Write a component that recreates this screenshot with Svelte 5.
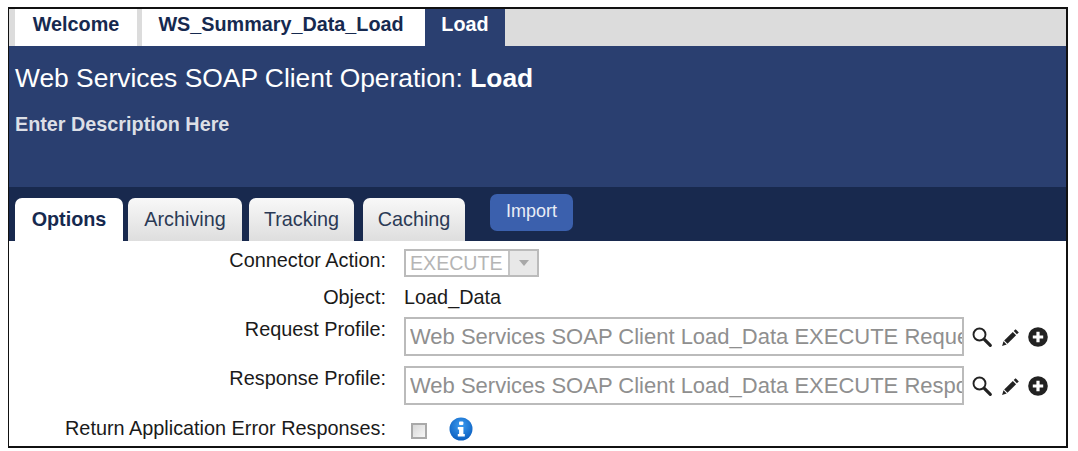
<script>
  const tabs = [
    { label: 'Welcome', cls: 'w1' },
    { label: 'WS_Summary_Data_Load', cls: 'w2' },
    { label: 'Load', cls: 'w3 active' }
  ];
  const subTabs = [
    { label: 'Options', cls: 's1 active' },
    { label: 'Archiving', cls: 's2' },
    { label: 'Tracking', cls: 's3' },
    { label: 'Caching', cls: 's4' }
  ];
  const profiles = [
    { label: 'Request Profile:', value: 'Web Services SOAP Client Load_Data EXECUTE Request Profile', cls: 'req' },
    { label: 'Response Profile:', value: 'Web Services SOAP Client Load_Data EXECUTE Response Profile', cls: 'res' }
  ];
</script>

<div class="frame">
  <nav class="top">
    {#each tabs as t}
      <div class="ttab {t.cls}">{t.label}</div>
    {/each}
  </nav>
  <header class="head">
    <h1>Web Services SOAP Client Operation: <b>Load</b></h1>
    <p>Enter Description Here</p>
  </header>
  <div class="bar">
    {#each subTabs as t}
      <div class="stab {t.cls}">{t.label}</div>
    {/each}
    <button class="import">Import</button>
  </div>
  <div class="form">
    <div class="row r1">
      <span class="lab">Connector Action:</span>
      <div class="sel"><span class="selv">EXECUTE</span><span class="arrow"><i></i></span></div>
    </div>
    <div class="row r2">
      <span class="lab">Object:</span>
      <span class="val">Load_Data</span>
    </div>
    {#each profiles as p}
      <div class="row prof {p.cls}">
        <span class="lab">{p.label}</span>
        <input class="inp" readonly value={p.value} />
        <div class="icons">
          <svg width="22" height="22" viewBox="0 0 22 22"><circle cx="8.5" cy="8.5" r="6" fill="none" stroke="#222" stroke-width="1.9"/><path d="M13.3 13.3l6 6" stroke="#222" stroke-width="3.2" stroke-linecap="round"/></svg>
          <svg width="19" height="19" viewBox="0 0 19 19"><path d="M14.6 1.2l3.2 3.2-1.9 1.9-3.2-3.2z" fill="#222"/><path d="M11.8 3.9l3.3 3.3-8.6 8.6-3.3-3.3z" fill="#222"/><path d="M2.5 13.3l3.2 3.2-4.6 1.4z" fill="#222"/></svg>
          <svg width="20" height="20" viewBox="0 0 20 20"><circle cx="10" cy="10" r="9.8" fill="#222"/><path d="M10 4.8v10.4M4.8 10h10.4" stroke="#fff" stroke-width="3.2"/></svg>
        </div>
      </div>
    {/each}
    <div class="row r5">
      <span class="lab">Return Application Error Responses:</span>
      <span class="check"></span>
      <svg class="info" width="24" height="24" viewBox="0 0 24 24">
        <defs><radialGradient id="g" cx="50%" cy="35%" r="65%"><stop offset="0" stop-color="#3d9cf0"/><stop offset="1" stop-color="#0b5fc0"/></radialGradient></defs>
        <circle cx="12" cy="12" r="11.5" fill="url(#g)"/>
        <rect x="10" y="4.5" width="4.4" height="3.6" rx="1" fill="#fff"/>
        <path d="M8.8 10h5.6v7h1.4v2.4H8.8V17h1.3v-4.6H8.8z" fill="#fff"/>
      </svg>
    </div>
  </div>
</div>

<style>
  :global(body) { margin: 0; background: #fff; }
  .frame {
    box-sizing: border-box;
    width: 1060px;
    height: 441px;
    margin: 7px 0 0 8px;
    border: 2px solid #111;
    border-width: 2px 2px 2px 1.5px;
    font-family: "Liberation Sans", Arial, sans-serif;
    overflow: hidden;
    background: #fff;
    color: #1a1a1a;
  }
  .top { display: flex; height: 37px; background: #dcdcdc; padding-left: 6px; }
  .ttab {
    display: flex; align-items: center; justify-content: center;
    background: #fff; font-weight: 700; font-size: 19.8px; color: #16294f; padding-bottom: 6px; box-sizing: border-box;
  }
  .w1 { width: 122px; margin-right: 5px; }
  .w2 { width: 283px; padding-right: 5px; }
  .w3 { width: 80px; }
  .ttab.active { background: #2a3f70; color: #fff; }
  .head { background: #2a3f70; height: 141px; box-sizing: border-box; padding: 15px 0 0 6px; color: #fff; }
  h1 { margin: 0; font-size: 26.4px; font-weight: 400; line-height: 34px; }
  h1 b { font-weight: 700; }
  .head p { margin: 18px 0 0; font-size: 19.8px; font-weight: 700; color: #dcdfe6; line-height: 22px; }
  .bar { position: relative; height: 54px; background: #18294e; display: flex; align-items: flex-end; padding-left: 6px; }
  .stab {
    box-sizing: border-box; height: 43px; border-radius: 7px 7px 0 0;
    display: flex; align-items: center; justify-content: center;
    background: linear-gradient(#f8f8f8, #dedede);
    font-size: 19.8px; color: #2b3a55;
  }
  .s1 { width: 108px; margin-right: 5px; }
  .s2 { width: 114px; margin-right: 7px; }
  .s3 { width: 105px; margin-right: 9px; }
  .s4 { width: 102px; }
  .stab.active { background: #fff; font-weight: 700; color: #16294f; }
  .import {
    align-self: flex-start; margin: 7px 0 0 25px;
    width: 83px; height: 37px; padding: 0 0 2px; border: 0; border-radius: 7px;
    background: #3b60ad; color: #e8edf6; font: 18px "Liberation Sans", Arial, sans-serif;
  }
  .form { display: flex; flex-direction: column; font-size: 19.85px; }
  .row { display: grid; grid-template-columns: 377px auto 1fr; column-gap: 18px; align-items: center; }
  .lab { text-align: right; white-space: nowrap; }
  .r1 { margin-top: 8px; height: 28px; }
  .r1 .lab { margin-top: -5px; }
  .sel {
    width: 135px; height: 28px; box-sizing: border-box; border: 2px solid #bbb;
    display: flex; align-items: stretch;
  }
  .selv { flex: 1; color: #b5b5b5; font-size: 19.6px; line-height: 24px; padding-left: 4px; }
  .arrow { width: 27px; background: #e8e8e8; border-left: 2px solid #c4c4c4; display: flex; align-items: center; justify-content: center; }
  .arrow i { border: 5px solid transparent; border-top: 6px solid #a8a8a8; border-bottom: 0; }
  .r2 { height: 22px; margin-top: 9px; }
  .prof { align-items: start; }
  .prof .lab { line-height: 25px; }
  .req { margin-top: 9px; height: 38px; }
  .res { margin-top: 11px; height: 39px; }
  .inp {
    width: 560px; height: 100%; box-sizing: border-box; border: 2px solid #bbb; margin: 0; outline: 0;
    padding: 1px 0 0 4px; color: #8f8f8f; font: 22px "Liberation Sans", Arial, sans-serif; background: #fff;
  }
  .icons { display: flex; align-items: center; gap: 8px; height: 38px; margin: 1px 0 0 -11px; }
  .r5 { margin-top: 12px; height: 24px; grid-template-columns: 377px auto auto 1fr; }
  .r5 .lab { margin-top: -2px; }
  .check {
    width: 16px; height: 16px; box-sizing: border-box; border: 2px solid #a9a9a9;
    background: linear-gradient(135deg, #d8d8d8, #f6f6f6); margin: 4px 0 0 7px;
  }
  .info { margin-left: 4px; }
</style>
